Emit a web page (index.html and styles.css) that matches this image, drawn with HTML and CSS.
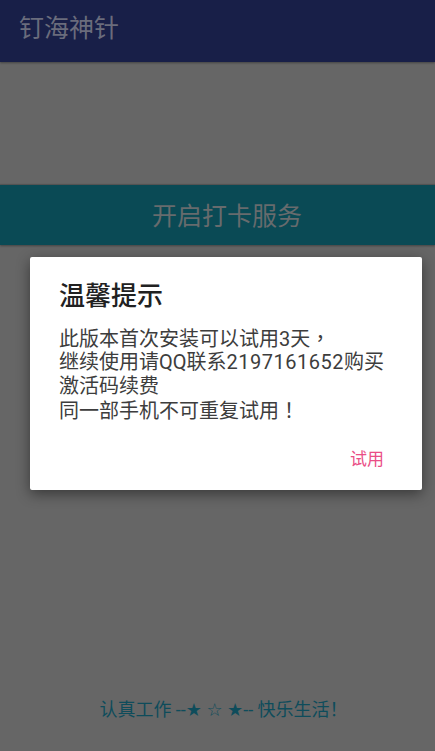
FILE: index.html
```html
<!DOCTYPE html>
<html lang="zh-CN">
<head>
<meta charset="utf-8">
<title>钉海神针</title>
<link rel="stylesheet" href="styles.css">
</head>
<body>
<div class="screen">
  <header class="appbar"><span class="appbar-title">钉海神针</span></header>
  <main class="content">
    <div class="start-btn">开启打卡服务</div>
  </main>
  <footer class="footer">认真工作 --<span class="star">★</span> <span class="star">☆</span> <span class="star">★</span>-- 快乐生活！</footer>
</div>
<div class="dialog">
  <h2 class="dialog-title">温馨提示</h2>
  <p class="dialog-msg">此版本首次安装可以试用3天<span class="punct" lang="zh-TW">，</span><br>继续使用请QQ联系<span class="num">2197161652</span>购买<br>激活码续费<br>同一部手机不可重复试用<span class="punct" lang="zh-TW">！</span></p>
  <div class="dialog-actions"><span class="dialog-btn">试用</span></div>
</div>
</body>
</html>
```
FILE: styles.css
```css
* { box-sizing: border-box; }
html, body { margin: 0; padding: 0; }
body {
  background: #666666;
  font-family: Roboto, "Noto Sans CJK SC", sans-serif;
  width: 435px;
  height: 751px;
  overflow: hidden;
}
.screen {
  display: flex;
  flex-direction: column;
  height: 751px;
}
.appbar {
  height: 62px;
  background: #181f48;
  display: flex;
  align-items: center;
  padding: 0 0 5px 19px;
  box-shadow: 0 1px 2px rgba(0,0,0,0.35);
  position: relative;
  z-index: 1;
}
.appbar-title {
  font-size: 25px;
  color: #6a6c7c;
  line-height: 1;
}
.content {
  padding-top: 123px;
}
.start-btn {
  height: 60px;
  background: #0a4a55;
  color: #676b6d;
  font-size: 25px;
  display: flex;
  align-items: center;
  justify-content: center;
  padding: 0 0 2px 19px;
  box-shadow: 0 1px 2px rgba(0,0,0,0.35), 0 -1px 1px rgba(0,0,0,0.15);
}
.footer {
  margin-top: auto;
  padding: 0 0 30px 12px;
  text-align: center;
  font-size: 18px;
  color: #0e4c5b;
  line-height: 22px;
}
.star {
  font-family: "DejaVu Sans", sans-serif;
  font-size: 18px;
}
.punct {
  font-family: "Noto Sans CJK TC", sans-serif;
}
.dialog {
  position: absolute;
  left: 30px;
  top: 257px;
  width: 392px;
  height: 233px;
  background: #ffffff;
  border-radius: 2px;
  box-shadow: 0 4px 14px rgba(0,0,0,0.45);
  padding: 22px 29px 0 29px;
}
.dialog-title {
  margin: 0;
  font-size: 26px;
  line-height: 34px;
  font-weight: 500;
  color: #212121;
}
.dialog-msg {
  margin: 13px 0 0 0;
  font-size: 20px;
  line-height: 23.4px;
  color: #3d3d3d;
  white-space: nowrap;
}
.num { letter-spacing: 0.5px; }
.dialog-actions {
  display: flex;
  justify-content: flex-end;
  margin-top: 25px;
  padding-right: 9px;
}
.dialog-btn {
  font-size: 17px;
  line-height: 20px;
  color: #ea4e86;
}
```
